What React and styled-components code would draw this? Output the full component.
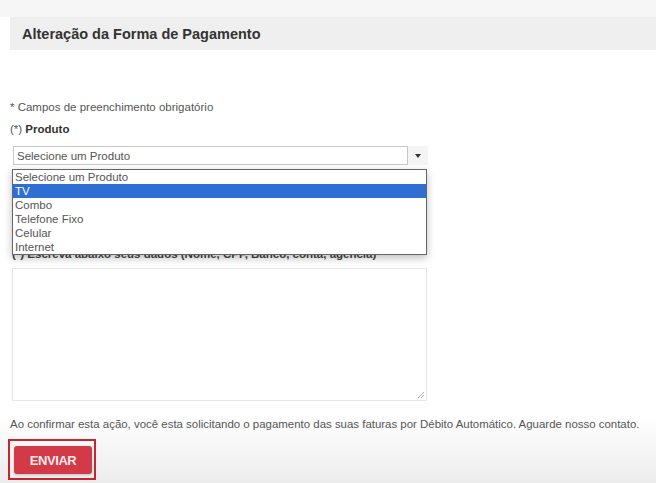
import React from 'react'
import styled, { createGlobalStyle } from 'styled-components'

const GlobalStyle = createGlobalStyle`
  html, body { margin: 0; padding: 0; background: #fff; }
  body { font-family: "Liberation Sans", Arial, Helvetica, sans-serif; color: #444; }
`

const Page = styled.div`
  width: 656px;
  height: 483px;
  overflow: hidden;
  background: linear-gradient(to bottom, #fff 0%, #fff 86%, #ececec 100%);
`

const TopStrip = styled.div`
  height: 17px;
  background: #f6f6f6;
`

const Header = styled.div`
  margin-left: 10px;
  height: 33px;
  background: #efefef;
  display: flex;
  align-items: center;
  padding-left: 12px;
`

const Title = styled.h1`
  margin: 0;
  font-size: 14.5px;
  font-weight: bold;
  color: #333;
`

const Form = styled.form`
  padding: 51px 10px 0 10px;
  display: flex;
  flex-direction: column;
`

const Note = styled.div`
  font-size: 11.5px;
  color: #555;
  line-height: 13px;
`

const Label = styled.div`
  margin-top: 9px;
  font-size: 11.5px;
  line-height: 13px;
  color: #555;
  b { color: #333; }
`

const SelectWrap = styled.div`
  position: relative;
  margin-top: 10px;
  margin-left: 3px;
  width: 415px;
  height: 19px;
  display: flex;
  background: #f4f4f4;
`

const SelectBox = styled.div`
  flex: 1;
  border: 1px solid #c8c8c8;
  background: #fff;
  font-size: 11.5px;
  color: #555;
  padding-left: 3px;
  display: flex;
  align-items: center;
`

const Arrow = styled.div`
  width: 20px;
  display: flex;
  align-items: center;
  justify-content: center;
  &::after {
    content: '';
    border-left: 3px solid transparent;
    border-right: 3px solid transparent;
    border-top: 4px solid #333;
  }
`

const Dropdown = styled.ul`
  position: absolute;
  top: 23px;
  left: -1px;
  width: 413px;
  margin: 0;
  padding: 0;
  list-style: none;
  background: #fff;
  border: 1px solid #666;
  box-shadow: 0 3px 8px rgba(0, 0, 0, 0.25);
  z-index: 2;
`

const Option = styled.li`
  height: 14px;
  line-height: 14px;
  font-size: 11.5px;
  padding-left: 2px;
  color: ${p => (p.$active ? '#fff' : '#555')};
  background: ${p => (p.$active ? '#2f6fd3' : 'transparent')};
`

const HiddenLabel = styled.div`
  margin-top: 83px;
  font-size: 11.5px;
  line-height: 13px;
  font-weight: bold;
  color: #444;
  padding-left: 2px;
`

const TextArea = styled.div`
  position: relative;
  margin-top: 7px;
  margin-left: 2px;
  width: 413px;
  height: 131px;
  border: 1px solid #e6e6e6;
  background: #fff;
`

const Grip = styled.svg`
  position: absolute;
  right: 1px;
  bottom: 1px;
`

const Info = styled.p`
  margin: 17px 0 0 0;
  font-size: 11.45px;
  line-height: 13px;
  color: #555;
  white-space: nowrap;
`

const Highlight = styled.div`
  margin-top: 8px;
  margin-left: -2px;
  width: 78px;
  height: 31px;
  border: 2px solid #c3262b;
  padding: 3px;
`

const Button = styled.button`
  display: block;
  margin: 2px 0 0 1px;
  width: 78px;
  height: 28px;
  border: none;
  border-radius: 3px;
  background: #d33a48;
  color: #fbe9ea;
  font-family: "Liberation Sans Narrow", "Liberation Sans", Arial, sans-serif;
  font-weight: bold;
  font-size: 13px;
  letter-spacing: -0.4px;
  box-shadow: 0 1px 2px rgba(0, 0, 0, 0.2);
`

const produtos = ['Selecione um Produto', 'TV', 'Combo', 'Telefone Fixo', 'Celular', 'Internet']

export default function App() {
  return (
    <Page>
      <GlobalStyle />
      <TopStrip />
      <Header>
        <Title>Alteração da Forma de Pagamento</Title>
      </Header>
      <Form onSubmit={e => e.preventDefault()}>
        <Note>* Campos de preenchimento obrigatório</Note>
        <Label>(*) <b>Produto</b></Label>
        <SelectWrap>
          <SelectBox>Selecione um Produto</SelectBox>
          <Arrow />
          <Dropdown>
            {produtos.map(p => (
              <Option key={p} $active={p === 'TV'}>{p}</Option>
            ))}
          </Dropdown>
        </SelectWrap>
        <HiddenLabel>(*) Escreva abaixo seus dados (Nome, CPF, Banco, conta, agencia)</HiddenLabel>
        <TextArea>
          <Grip width="8" height="8" viewBox="0 0 8 8">
            <path d="M7 1L1 7M7 4L4 7" stroke="#aaa" strokeWidth="1" />
          </Grip>
        </TextArea>
        <Info>Ao confirmar esta ação, você esta solicitando o pagamento das suas faturas por Débito Automático. Aguarde nosso contato.</Info>
        <Highlight>
          <Button type="submit">ENVIAR</Button>
        </Highlight>
      </Form>
    </Page>
  )
}
